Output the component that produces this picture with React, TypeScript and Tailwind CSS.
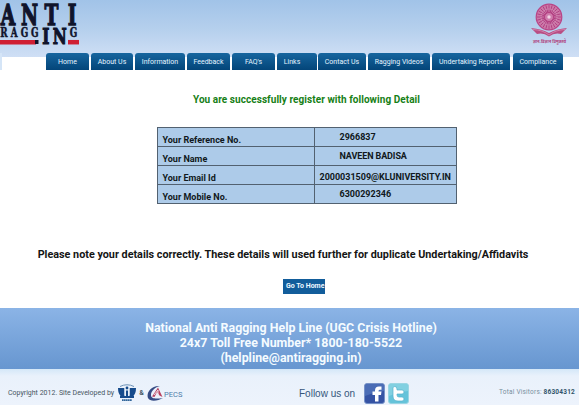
import React from "react";

const tabs = [
  { label: "Home", box: "w-[43px]", text: "tracking-[0.1px]" },
  { label: "About Us", box: "w-[42px] ml-[2px]", text: "" },
  { label: "Information", box: "w-[50px] ml-[2px]", text: "" },
  { label: "Feedback", box: "w-[43px] ml-[2px]", text: "" },
  { label: "FAQ's", box: "w-[43px] ml-[2px]", text: "" },
  { label: "Links", box: "w-[40px] ml-[2px] pr-[10px]", text: "" },
  { label: "Contact Us", box: "w-[48px] ml-[1px]", text: "" },
  { label: "Ragging Videos", box: "w-[62px] ml-[2px]", text: "" },
  { label: "Undertaking Reports", box: "w-[78px] ml-[2px]", text: "" },
  { label: "Compliance", box: "w-[50px] ml-[3px]", text: "" },
];

const rows = [
  { label: "Your Reference No.", value: "2966837", cell: "pl-[25px] pb-px" },
  { label: "Your Name", value: "NAVEEN BADISA", cell: "pl-[25px] tracking-[-0.1px]" },
  { label: "Your Email Id", value: "2000031509@KLUNIVERSITY.IN", cell: "pl-[5px] pt-[3px] tracking-[-0.01px]" },
  { label: "Your Mobile No.", value: "6300292346", cell: "pl-[25px] pb-px" },
];

function Logo() {
  return (
    <svg width="82" height="48" viewBox="0 0 82 48" overflow="visible" fontFamily="'DejaVu Serif', serif" fontWeight="bold" fill="#10142b" stroke="#10142b">
      <text transform="scale(.68 1)" x="1 31 65.500 99.500" y="24.500" fontSize="27.500" strokeWidth="1.300">ANTI</text>
      <text transform="scale(.68 1)" x=".5 16 30.500 45.500" y="37.500" fontSize="13" strokeWidth=".5">RAGG</text>
      <text transform="scale(.68 1)" x="62 77.500" y="44" fontSize="22.500" strokeWidth="1.200">IN</text>
      <text transform="scale(.68 1)" x="102.500" y="37.500" fontSize="13" strokeWidth=".5">G</text>
      <path d="M0 42.200H36" stroke="#cf1f33" strokeWidth="4.500" />
      <path d="M35 42H38.500" strokeWidth="4" />
      <path d="M68 42.200H79" stroke="#cf1f33" strokeWidth="4.500" />
    </svg>
  );
}

function Emblem() {
  const spokes = Array.from({ length: 24 }, (_, i) => i * 15);
  return (
    <svg width="40" height="44" viewBox="0 0 40 44">
      <circle cx="20" cy="16" r="12.800" fill="#cc78a7" stroke="#b94486" strokeWidth="1.200" />
      {spokes.map((a) => (
        <path key={a} d="M20 12V4" stroke="#ad397e" strokeWidth=".8" transform={`rotate(${a} 20 16)`} />
      ))}
      <circle cx="20" cy="16" r="8" fill="none" stroke="#ddaccb" strokeWidth=".8" strokeDasharray="1 1" />
      <circle cx="20" cy="16" r="4.500" fill="#cf7bac" stroke="#b43e80" />
      <circle cx="20" cy="16" r="1.700" fill="#efd0e2" />
      <path d="M2 27Q13 28 20 32Q27 28 38 27L32 33Q26 31 20 35.500Q14 31 8 33Z" fill="#b94d83" />
      <path d="M4 28.500Q14 29 20 34Q26 29 36 28.500" fill="none" stroke="#d897bd" strokeWidth=".7" />
      <text x="4" y="41.500" fontSize="4" textLength="33" fontFamily="'Noto Sans', sans-serif" fontWeight="bold" fill="#b0407c">ज्ञान-विज्ञान विमुक्तये</text>
    </svg>
  );
}

function DeveloperMark() {
  return (
    <svg width="18" height="18" viewBox="0 0 18 18">
      <path d="M2 2.500Q9-1 16 2.500" fill="none" stroke="#6c91b6" strokeWidth="1" />
      <path d="M0 4H6.500V12H3Q0 10 0 4ZM11.500 4H18Q18 10 15 12H11.500Z" fill="#164b8c" />
      <path d="M2 11.500H16V14H2Z" fill="#164b8c" />
      <path d="M6.500 4H11.500V12H6.500Z" fill="#e8f0f8" />
      <circle cx="9" cy="4" r="1.400" fill="#164b8c" />
      <path d="M8 6.500H10V13H8Z" fill="#164b8c" />
      <path d="M4 16.200H14" stroke="#31669a" strokeWidth="1.800" strokeDasharray="1.600 .3" />
    </svg>
  );
}

function PecsMark() {
  return (
    <svg width="17" height="17" viewBox="0 0 17 17">
      <path d="M13 1C4 0-1 8 1 13C3 17 11 16 16 13C9 14 4 14 4 10C4 6 8 2 13 1Z" fill="#354b84" />
      <path d="M5 11.500L11 2.500L15.500 12L12.500 10.500L10 7L7.500 12Z" fill="#b84260" />
      <path d="M7 10L11 5V11" fill="none" stroke="#f2e6ed" strokeWidth=".9" />
    </svg>
  );
}

function Facebook() {
  return (
    <svg width="21" height="21" viewBox="0 0 21 21">
      <rect x=".5" y=".5" width="20" height="20" rx="2.500" fill="#3553a4" stroke="#7792c8" />
      <path d="M1 3Q1 1 3 1H18Q20 1 20 3V8Q10 9 1 13Z" fill="#5579bd" opacity=".7" />
      <path d="M11 18.500V12H8.500V8.500H11V7.500Q11 3.500 15 3.500H17.500V6.800H16Q14.500 6.800 14.500 8V8.500H17.500L17 12H14.500V18.500Z" fill="#fff" />
    </svg>
  );
}

function Twitter() {
  return (
    <svg width="21" height="21" viewBox="0 0 21 21">
      <rect x=".5" y=".5" width="20" height="20" rx="2.500" fill="#65c3da" stroke="#9ad5e3" />
      <path d="M1 3Q1 1 3 1H18Q20 1 20 3V8Q10 9 1 13Z" fill="#94d8e6" opacity=".6" />
      <path d="M6 3.500Q9 3 9 6V7H14Q16 7 16 9Q16 11 14 11H9V12Q9 14 11 14H14Q16 14 16 16Q16 18 14 18H10Q5 18 5 13V5Q5 4 6 3.500Z" fill="#fff" stroke="#57b3cd" strokeWidth=".7" />
    </svg>
  );
}

export default function App() {
  return (
    <div className="flex h-[405px] w-[579px] flex-col overflow-hidden bg-white font-['Roboto',sans-serif]">
      <header className="h-[70px] bg-[linear-gradient(#a1c3e8_0px,#b6d0ed_30px,#cfdff5_57px,transparent_57px)]">
        <div className="flex h-[53px] items-start justify-between pr-[10px]">
          <Logo />
          <div className="pt-px"><Emblem /></div>
        </div>
        <nav className="flex h-[17px] border-l-2 border-[#d5e5f7] pl-[44px]">
          {tabs.map((tab) => (
            <a key={tab.label} className={`flex h-[17px] shrink-0 items-center justify-center whitespace-nowrap rounded-t-[3px] bg-linear-to-b from-[#17669f] to-[#044579] pt-[2px] text-[7px] leading-none text-[#e5f4ff] ${tab.box}`}>
              <span className={tab.text}>{tab.label}</span>
            </a>
          ))}
        </nav>
      </header>

      <main className="flex h-[238px] flex-col items-center">
        <h1 className="mt-[23px] ml-[34px] h-[14px] whitespace-nowrap text-[10px] leading-[14px] font-bold tracking-[0.06px] text-[#168016]">You are successfully register with following Detail</h1>
        <table className="mt-[20px] ml-[34px] w-[300px] table-fixed border-collapse bg-[#adcbe9] text-[9px] leading-[12px] font-bold text-[#101820]">
          <colgroup><col className="w-[157px]" /><col /></colgroup>
          <tbody>
            {rows.map((row) => (
              <tr key={row.label} className="h-[19px]">
                <td className="border border-[#526170] p-0 pt-[5px] pl-[5px] whitespace-nowrap">{row.label}</td>
                <td className={`border border-[#526170] p-0 whitespace-nowrap ${row.cell}`}>{row.value}</td>
              </tr>
            ))}
          </tbody>
        </table>
        <p className="mt-[43px] mr-[13px] whitespace-nowrap text-[10.8px] leading-[16px] font-bold text-[#151515]">Please note your details correctly. These details will used further for duplicate Undertaking/Affidavits</p>
        <button className="mt-[16px] ml-[29px] h-[15px] w-[42px] overflow-hidden bg-[#125d9b] pl-[3px] text-left text-[7px] leading-[15px] font-bold whitespace-nowrap text-[#edf7ff]">Go To Home</button>
      </main>

      <section className="h-[61px] bg-linear-to-b from-[#8bb4e6] to-[#6796d0] pt-[12px] pl-[3px] text-center text-[12.4px] leading-[15px] font-bold text-[#f4fbff]">
        <p>National Anti Ragging Help Line (UGC Crisis Hotline)</p>
        <p>24x7 Toll Free Number* 1800-180-5522</p>
        <p>(helpline@antiragging.in)</p>
      </section>

      <footer className="flex h-[36px] items-center bg-[linear-gradient(#d4e7f8_0px,#e9f1fb_7px,#edf3fc_100%)] pt-[12px] pr-[3px] pl-[8px]">
        <div className="flex w-[291px] items-center text-[7px] whitespace-nowrap text-[#465662]">
          <span className="w-[110px]">Copyright 2012. Site Developed by</span>
          <DeveloperMark />
          <span className="w-[11px] text-center font-bold">&amp;</span>
          <PecsMark />
          <span className="pt-[4px] text-[7.5px] text-[#4c7daa]">PECS</span>
        </div>
        <div className="flex items-center whitespace-nowrap">
          <span className="w-[65px] font-['Liberation_Sans',sans-serif] text-[10px] text-[#35567b]">Follow us on</span>
          <Facebook />
          <span className="ml-[3px] flex"><Twitter /></span>
        </div>
        <p className="ml-auto pr-px text-[6.5px] tracking-[0.2px] whitespace-nowrap text-[#78909e]">Total Visitors: <b className="text-[#31556b]">86304312</b></p>
      </footer>
    </div>
  );
}
